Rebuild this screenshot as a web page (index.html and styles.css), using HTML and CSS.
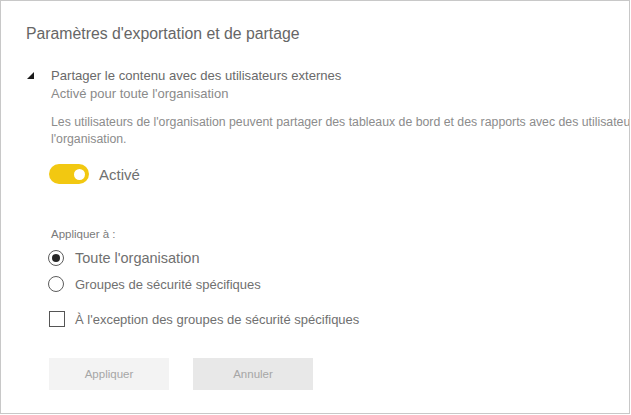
FILE: index.html
```html
<!DOCTYPE html>
<html lang="fr">
<head>
<meta charset="utf-8">
<link rel="stylesheet" href="styles.css">
</head>
<body>
<div class="panel">
  <h1 class="title">Paramètres d'exportation et de partage</h1>
  <div class="section">
    <div class="section-head">
      <span class="caret"></span>
      <div class="head-text">
        <div class="setting-name">Partager le contenu avec des utilisateurs externes</div>
        <div class="setting-state">Activé pour toute l'organisation</div>
      </div>
    </div>
    <div class="body">
      <p class="desc">Les utilisateurs de l'organisation peuvent partager des tableaux de bord et des rapports avec des utilisateurs externes à<br>l'organisation.</p>
      <div class="toggle-row">
        <span class="toggle"><span class="knob"></span></span>
        <span class="toggle-label">Activé</span>
      </div>
      <div class="apply-label">Appliquer à :</div>
      <div class="radio-row big">
        <span class="radio checked"></span>
        <span>Toute l'organisation</span>
      </div>
      <div class="radio-row">
        <span class="radio"></span>
        <span>Groupes de sécurité spécifiques</span>
      </div>
      <div class="check-row">
        <span class="checkbox"></span>
        <span>À l'exception des groupes de sécurité spécifiques</span>
      </div>
      <div class="buttons">
        <button class="btn apply">Appliquer</button>
        <button class="btn cancel">Annuler</button>
      </div>
    </div>
  </div>
</div>
</body>
</html>
```
FILE: styles.css
```css
html, body {
  margin: 0;
  padding: 0;
  background: #ffffff;
}
body {
  font-family: "Liberation Sans", Arial, sans-serif;
  color: #666666;
}
.panel {
  box-sizing: border-box;
  width: 630px;
  height: 414px;
  border: 1px solid #c8c8c8;
  overflow: hidden;
  padding: 23px 0 0 25px;
}
.title {
  margin: 0;
  font-size: 15.8px;
  font-weight: normal;
  line-height: 20px;
  color: #666666;
  white-space: nowrap;
}
.section {
  margin-top: 23px;
}
.section-head {
  display: flex;
  align-items: flex-start;
}
.caret {
  width: 0;
  height: 0;
  margin: 5px 0 0 1px;
  border-left: 7px solid transparent;
  border-bottom: 7px solid #1a1a1a;
}
.head-text {
  margin-left: 17px;
}
.setting-name {
  font-size: 13.1px;
  line-height: 18px;
  color: #6a6a6a;
  white-space: nowrap;
}
.setting-state {
  font-size: 13px;
  line-height: 18px;
  color: #8a8a8a;
  white-space: nowrap;
}
.body {
  padding-left: 23px;
}
.desc {
  margin: 11px 0 0 2px;
  font-size: 12.3px;
  line-height: 17px;
  color: #8c8c8c;
  white-space: nowrap;
}
.toggle-row {
  display: flex;
  align-items: center;
  margin-top: 16px;
  height: 20px;
}
.toggle {
  box-sizing: border-box;
  width: 40px;
  height: 20px;
  border-radius: 10px;
  background: #f2c811;
  display: flex;
  align-items: center;
  justify-content: flex-end;
  padding-right: 4px;
}
.knob {
  width: 11px;
  height: 11px;
  border-radius: 50%;
  background: #ffffff;
}
.toggle-label {
  margin-left: 10px;
  font-size: 15px;
  color: #707070;
}
.apply-label {
  margin: 43px 0 0 2px;
  font-size: 11.5px;
  line-height: 15px;
  color: #7a7a7a;
}
.radio-row {
  display: flex;
  align-items: center;
  height: 24px;
  margin-left: -1px;
  font-size: 13px;
  color: #707070;
}
.radio-row.big {
  margin-top: 4px;
  font-size: 14.5px;
}
.radio-row + .radio-row {
  margin-top: 2px;
}
.radio {
  box-sizing: border-box;
  width: 16px;
  height: 16px;
  border: 1px solid #5c5c5c;
  border-radius: 50%;
  margin-right: 11px;
  display: flex;
  align-items: center;
  justify-content: center;
}
.radio.checked::after {
  content: "";
  width: 8px;
  height: 8px;
  border-radius: 50%;
  background: #252525;
}
.check-row {
  display: flex;
  align-items: center;
  height: 16px;
  margin-top: 15px;
  font-size: 13px;
  color: #707070;
}
.checkbox {
  box-sizing: border-box;
  width: 16px;
  height: 16px;
  border: 1px solid #555555;
  margin-right: 10px;
}
.buttons {
  display: flex;
  gap: 24px;
  margin-top: 31px;
}
.btn {
  width: 120px;
  height: 32px;
  border: none;
  font-family: "Liberation Sans", Arial, sans-serif;
  font-size: 11.5px;
  color: #a6a6a6;
  padding: 0;
}
.btn.apply {
  background: #f3f3f3;
}
.btn.cancel {
  background: #e8e8e8;
}
```
